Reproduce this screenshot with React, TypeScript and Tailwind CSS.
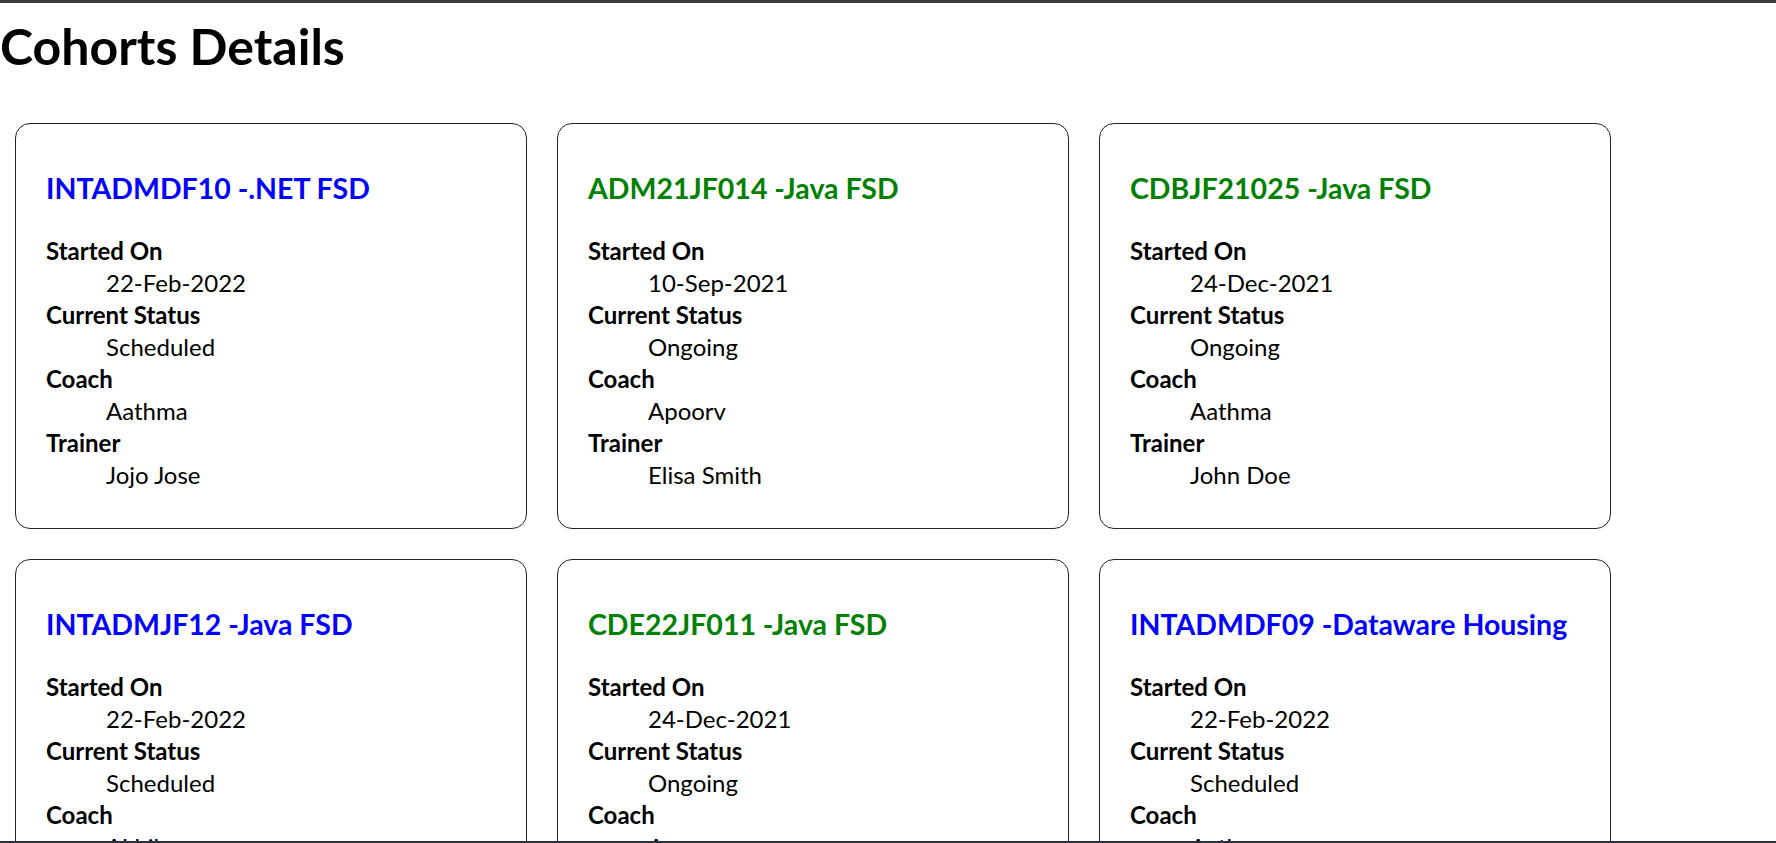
type Cohort = {
  code: string;
  course: string;
  startedOn: string;
  status: string;
  coach: string;
  trainer: string;
};

const cohorts: Cohort[] = [
  { code: 'INTADMDF10', course: '.NET FSD', startedOn: '22-Feb-2022', status: 'Scheduled', coach: 'Aathma', trainer: 'Jojo Jose' },
  { code: 'ADM21JF014', course: 'Java FSD', startedOn: '10-Sep-2021', status: 'Ongoing', coach: 'Apoorv', trainer: 'Elisa Smith' },
  { code: 'CDBJF21025', course: 'Java FSD', startedOn: '24-Dec-2021', status: 'Ongoing', coach: 'Aathma', trainer: 'John Doe' },
  { code: 'INTADMJF12', course: 'Java FSD', startedOn: '22-Feb-2022', status: 'Scheduled', coach: 'Akhila', trainer: 'Jojo Jose' },
  { code: 'CDE22JF011', course: 'Java FSD', startedOn: '24-Dec-2021', status: 'Ongoing', coach: 'Apoorv', trainer: 'John Doe' },
  { code: 'INTADMDF09', course: 'Dataware Housing', startedOn: '22-Feb-2022', status: 'Scheduled', coach: 'Aathma', trainer: 'Elisa Smith' },
];

function CohortCard({ cohort }: { cohort: Cohort }) {
  // scheduled ones are blue, ongoing ones green
  const color = cohort.status === 'Ongoing' ? 'text-[#008000]' : 'text-[#0000ff]';

  return (
    <div className="m-[15px] w-[512px] rounded-[15px] border border-[#222] px-[30px] py-[15px]">
      <h3 className={`mt-[31px] mb-[28px] text-[28.5px] font-bold leading-[37px] ${color}`}>
        {cohort.code} -{cohort.course}
      </h3>
      <dl className="mb-[22px] text-[24px] leading-[32px]">
        <dt className="font-bold">Started On</dt>
        <dd className="ml-[60px]">{cohort.startedOn}</dd>
        <dt className="font-bold">Current Status</dt>
        <dd className="ml-[60px]">{cohort.status}</dd>
        <dt className="font-bold">Coach</dt>
        <dd className="ml-[60px]">{cohort.coach}</dd>
        <dt className="font-bold">Trainer</dt>
        <dd className="ml-[60px]">{cohort.trainer}</dd>
      </dl>
    </div>
  );
}

export default function App() {
  return (
    <div className="relative h-[843px] overflow-hidden bg-white text-black" style={{ fontFamily: 'Lato, "Open Sans", sans-serif' }}>
      <div className="h-[3px] bg-[#3c3c3c]" />
      <h1 className="mt-[11px] mb-[30px] text-[50px] font-bold leading-[64px]">Cohorts Details</h1>
      <div className="flex flex-wrap">
        {cohorts.map((c) => (
          <CohortCard key={c.code} cohort={c} />
        ))}
      </div>
      {/* window edge at the bottom of the shot */}
      <div className="absolute bottom-0 left-0 h-[2px] w-full bg-[#2b3340]" />
    </div>
  );
}
